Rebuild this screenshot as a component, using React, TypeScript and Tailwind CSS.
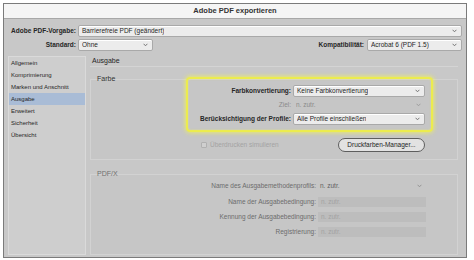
import React from 'react';

const font = { fontFamily: '"Liberation Sans", Arial, sans-serif' };

const Chevron = ({ color = '#6b6b6b' }: { color?: string }) => (
  <svg width="5" height="4" viewBox="0 0 5 4" className="shrink-0">
    <path d="M0.6 0.8 L2.5 2.8 L4.4 0.8" fill="none" stroke={color} strokeWidth="0.9" />
  </svg>
);

const Select = ({
  value,
  className = '',
  muted = false,
}: {
  value: string;
  className?: string;
  muted?: boolean;
}) => (
  <div
    className={`flex items-center justify-between h-[12px] pl-[3px] pr-[4px] rounded-[2px] ${
      muted
        ? 'text-[#8a8a8a]'
        : 'bg-[#ececec] border border-[#a9a9a9] shadow-[inset_0_1px_0_#ffffff] text-[#262626]'
    } ${className}`}
  >
    <span className="truncate">{value}</span>
    <Chevron color={muted ? '#9a9a9a' : '#6b6b6b'} />
  </div>
);

const navItems = [
  'Allgemein',
  'Komprimierung',
  'Marken und Anschnitt',
  'Ausgabe',
  'Erweitert',
  'Sicherheit',
  'Übersicht',
];

const pdfxRows = [
  'Name der Ausgabebedingung:',
  'Kennung der Ausgabebedingung:',
  'Registrierung:',
];

export default function App() {
  return (
    <div className="w-[474px] h-[260px] bg-white pt-[3px] pl-[3px] overflow-hidden" style={font}>
      <div className="w-[464px] h-[255px] border border-[#7b7b7b] bg-[#c8c8c8] flex flex-col text-[6.5px] text-[#262626]">
        {/* title bar */}
        <div className="h-[15px] shrink-0 bg-[#f5f5f5] border-b border-[#a8a8a8] flex items-center justify-center font-bold text-[7.5px] text-[#333]">
          Adobe PDF exportieren
        </div>

        {/* preset rows */}
        <div className="px-[4px] pt-[6px] flex flex-col gap-[2px]">
          <div className="flex items-center gap-[2px]">
            <div className="w-[68px] text-right font-bold">Adobe PDF-Vorgabe:</div>
            <Select value="Barrierefreie PDF (geändert)" className="flex-1" />
          </div>
          <div className="flex items-center gap-[2px]">
            <div className="w-[68px] text-right font-bold">Standard:</div>
            <Select value="Ohne" className="w-[75px]" />
            <div className="flex-1 text-right font-bold pr-[1px]">Kompatibilität:</div>
            <Select value="Acrobat 6 (PDF 1.5)" className="w-[95px]" />
          </div>
        </div>

        {/* content */}
        <div className="flex flex-1 px-[4px] pt-[5px] pb-[2px] gap-[3px] min-h-0">
          {/* sidebar */}
          <div className="w-[78px] bg-[#cecece] border border-[#dadada] flex flex-col text-[6px]">
            {navItems.map((item) => (
              <div
                key={item}
                className={`h-[12px] flex items-center pl-[2px] ${
                  item === 'Ausgabe' ? 'bg-[#a9bcd6]' : ''
                }`}
              >
                {item}
              </div>
            ))}
          </div>

          {/* main panel */}
          <div className="flex-1 flex flex-col pl-[1px] pr-[4px]">
            <div className="h-[11px] flex items-center pl-[2px] text-[7px] border-b border-[#d4d4d4]">
              Ausgabe
            </div>

            {/* Farbe group */}
            <div className="mt-[12px] h-[81px] border border-[#d2d2d2] bg-[#c6c6c6] flex flex-col">
              <div className="-mt-[5px] ml-[6px] w-fit leading-[8px] text-[#333] text-[7px]">Farbe</div>
              <div className="-mt-[6px] ml-[95px] w-[247px] rounded-[4px] border-2 border-[#ecec4e] shadow-[0_0_4px_1px_rgba(240,240,90,0.8),inset_0_0_2px_rgba(240,240,90,0.6)] pt-[6px] pb-[5px] pr-[6px] flex flex-col gap-[2px]">
                <div className="flex items-center gap-[2px]">
                  <div className="w-[103px] text-right font-bold">Farbkonvertierung:</div>
                  <Select value="Keine Farbkonvertierung" className="flex-1 h-[11px]" />
                </div>
                <div className="flex items-center gap-[2px]">
                  <div className="w-[103px] text-right text-[#8a8a8a]">Ziel:</div>
                  <Select value="n. zutr." muted className="flex-1 h-[11px]" />
                </div>
                <div className="flex items-center gap-[2px]">
                  <div className="w-[103px] text-right font-bold">Berücksichtigung der Profile:</div>
                  <Select value="Alle Profile einschließen" className="flex-1 h-[11px]" />
                </div>
              </div>
              <div className="flex items-center mt-[6px] pl-[110px] pr-[32px]">
                <div className="flex items-center gap-[3px] text-[#a3a3a3]">
                  <div className="w-[6px] h-[6px] border border-[#b0b0b0] bg-[#cfcfcf] rounded-[1px]" />
                  <span>Überdrucken simulieren</span>
                </div>
                <div className="ml-auto h-[14px] w-[87px] rounded-full border border-[#5e5e5e] bg-[#e2e2e2] flex items-center justify-center text-[#222]">
                  Druckfarben-Manager...
                </div>
              </div>
            </div>

            {/* PDF/X group */}
            <div className="mt-[14px] flex-1 border border-[#d2d2d2] bg-[#c6c6c6] flex flex-col text-[#6c6c6c]">
              <div className="-mt-[5px] ml-[6px] w-fit leading-[8px] text-[7px] text-[#707070]">PDF/X</div>
              <div className="flex items-center gap-[2px] mt-[2px] h-[12px]">
                <div className="w-[225px] text-right">Name des Ausgabemethodenprofils:</div>
                <div className="w-[108px] flex items-center justify-between pl-[2px] pr-[4px] text-[#5f5f5f]">
                  <span>n. zutr.</span>
                  <Chevron color="#8f8f8f" />
                </div>
              </div>
              {pdfxRows.map((label) => (
                <div key={label} className="flex items-center gap-[2px] mt-[5px]">
                  <div className="w-[225px] text-right">{label}</div>
                  <div className="w-[108px] h-[10px] bg-[#bdbdbd] flex items-center pl-[3px] text-[#a2a2a2]">
                    n. zutr.
                  </div>
                </div>
              ))}
            </div>
          </div>
        </div>
      </div>
    </div>
  );
}
